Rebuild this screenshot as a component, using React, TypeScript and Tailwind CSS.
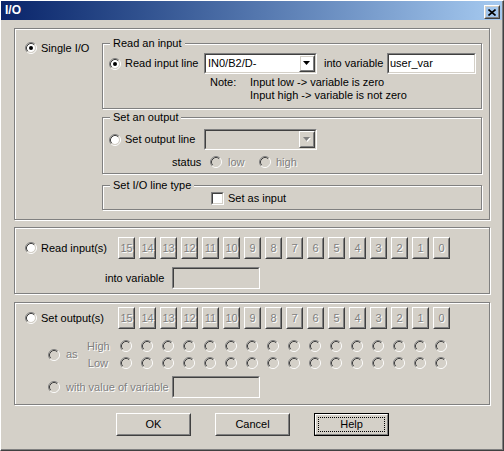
import React from 'react';

const FACE = '#D4D0C8';
const BITS = [15, 14, 13, 12, 11, 10, 9, 8, 7, 6, 5, 4, 3, 2, 1, 0];

const dis = 'text-[#808080] [text-shadow:1px_1px_0_#fff]';

function Radio({ checked = false, disabled = false }: { checked?: boolean; disabled?: boolean }) {
  return (
    <svg width="12" height="12" viewBox="0 0 12 12" className="block shrink-0">
      <circle cx="6" cy="6" r="4" fill={disabled ? FACE : '#fff'} />
      <path d="M2.11 9.89A5.5 5.5 0 0 1 9.89 2.11" fill="none" stroke="#808080" />
      <path d="M9.89 2.11A5.5 5.5 0 0 1 2.11 9.89" fill="none" stroke="#fff" />
      <path d="M2.82 9.18A4.5 4.5 0 0 1 9.18 2.82" fill="none" stroke="#404040" />
      <path d="M9.18 2.82A4.5 4.5 0 0 1 2.82 9.18" fill="none" stroke={FACE} />
      {checked && <circle cx="6" cy="6" r="2" fill="#000" />}
    </svg>
  );
}

function Checkbox() {
  return (
    <div className="w-[13px] h-[13px] shrink-0 border border-t-[#808080] border-l-[#808080] border-r-white border-b-white">
      <div className="w-full h-full bg-white border border-t-[#404040] border-l-[#404040] border-r-[#D4D0C8] border-b-[#D4D0C8]" />
    </div>
  );
}

function Sunken({ className = '', disabled = false, children }: { className?: string; disabled?: boolean; children?: React.ReactNode }) {
  return (
    <div className={`shrink-0 border border-t-[#808080] border-l-[#808080] border-r-white border-b-white ${className}`}>
      <div className={`w-full h-full border border-t-[#404040] border-l-[#404040] border-r-[#D4D0C8] border-b-[#D4D0C8] ${disabled ? 'bg-[#D4D0C8]' : 'bg-white'}`}>
        {children}
      </div>
    </div>
  );
}

function Raised({ className = '', children }: { className?: string; children?: React.ReactNode }) {
  return (
    <div className={`shrink-0 border border-t-white border-l-white border-r-[#404040] border-b-[#404040] ${className}`}>
      <div className="w-full h-full flex items-center justify-center border border-t-[#D4D0C8] border-l-[#D4D0C8] border-r-[#808080] border-b-[#808080]">
        {children}
      </div>
    </div>
  );
}

function Arrow({ disabled = false }: { disabled?: boolean }) {
  return (
    <svg width="8" height="5" viewBox="0 0 8 5" className="block">
      {disabled && <polygon points="1,1 8,1 4.5,5" fill="#fff" />}
      <polygon points="0,0 7,0 3.5,4" fill={disabled ? '#808080' : '#000'} />
    </svg>
  );
}

function Combo({ value, disabled = false }: { value?: string; disabled?: boolean }) {
  return (
    <Sunken className="w-[113px] h-[21px]" disabled={disabled}>
      <div className="flex h-full">
        <div className="flex-1 flex items-center pl-[2px]">{value}</div>
        <Raised className="w-[16px] h-full">
          <Arrow disabled={disabled} />
        </Raised>
      </div>
    </Sunken>
  );
}

function GroupBox({ className = '', label, children }: { className?: string; label?: string; children?: React.ReactNode }) {
  return (
    <div className={`relative shrink-0 border border-[#808080] shadow-[inset_1px_1px_0_#fff,1px_1px_0_#fff] ${className}`}>
      {label && (
        <span className="absolute -top-[7px] left-[7px] px-[3px] bg-[#D4D0C8] leading-[13px] whitespace-nowrap">{label}</span>
      )}
      {children}
    </div>
  );
}

function BitButtons() {
  return (
    <div className="flex gap-[4px]">
      {BITS.map(b => (
        <Raised key={b} className="w-[17px] h-[22px]">
          <span className={dis}>{b}</span>
        </Raised>
      ))}
    </div>
  );
}

function PushButton({ label }: { label: string }) {
  return (
    <Raised className="w-[75px] h-[23px]">
      <span>{label}</span>
    </Raised>
  );
}

export default function App() {
  return (
    <div className="w-[504px] h-[451px] bg-[#D4D0C8] text-black text-[11px] leading-[13px] overflow-hidden font-['Liberation_Sans',Arial,sans-serif]">
      <div className="h-full border border-t-white border-l-white border-r-[#404040] border-b-[#404040]">
        <div className="h-full border-r border-b border-r-[#808080] border-b-[#808080]">
          {/* title bar */}
          <div className="h-[19px] flex items-center justify-between pl-[4px] pr-[2px] bg-linear-to-r from-[#0A246A] to-[#A6CAF0]">
            <span className="text-white font-bold text-[12px]">I/O</span>
            <Raised className="w-[16px] h-[14px] self-end mb-[1px]">
              <svg width="8" height="7" viewBox="0 0 8 7" className="block">
                <path d="M0.5 0.5L7.5 6.5M7.5 0.5L0.5 6.5" stroke="#000" strokeWidth="1.6" />
              </svg>
            </Raised>
          </div>

          <div className="pl-[13px] pt-[8px] flex flex-col">
            {/* Single I/O */}
            <GroupBox className="w-[476px] h-[192px] flex">
              <div className="w-[87px] pl-[10px] pt-[13px]">
                <div className="flex items-center gap-[4px] h-[12px]">
                  <Radio checked />
                  <span className="whitespace-nowrap">Single I/O</span>
                </div>
              </div>
              <div className="pt-[14px] flex flex-col">
                <GroupBox label="Read an input" className="w-[380px] h-[66px]">
                  <div className="mt-[9px] pl-[6px] flex items-center h-[21px]">
                    <Radio checked />
                    <span className="ml-[4px] w-[79px] whitespace-nowrap">Read input line</span>
                    <Combo value="IN0/B2/D-" />
                    <span className="ml-[7px] w-[63px] whitespace-nowrap">into variable</span>
                    <Sunken className="w-[89px] h-[21px]">
                      <div className="h-full flex items-center pl-[1px]">user_var</div>
                    </Sunken>
                  </div>
                  <div className="mt-[2px] ml-[107px] flex">
                    <span className="w-[40px]">Note:</span>
                    <div className="flex flex-col whitespace-nowrap">
                      <span>Input low -&gt; variable is zero</span>
                      <span>Input high -&gt; variable is not zero</span>
                    </div>
                  </div>
                </GroupBox>

                <GroupBox label="Set an output" className="mt-[8px] w-[380px] h-[57px]">
                  <div className="mt-[11px] pl-[6px] flex items-center h-[21px]">
                    <Radio />
                    <span className="ml-[4px] w-[79px] whitespace-nowrap">Set output line</span>
                    <Combo disabled />
                  </div>
                  <div className="mt-[6px] ml-[69px] flex items-center h-[12px]">
                    <span className="w-[38px]">status</span>
                    <Radio disabled />
                    <span className={`ml-[6px] w-[31px] ${dis}`}>low</span>
                    <Radio disabled />
                    <span className={`ml-[5px] ${dis}`}>high</span>
                  </div>
                </GroupBox>

                <GroupBox label="Set I/O line type" className="mt-[11px] w-[380px] h-[25px]">
                  <div className="mt-[6px] ml-[108px] flex items-center h-[13px]">
                    <Checkbox />
                    <span className="ml-[4px] whitespace-nowrap">Set as input</span>
                  </div>
                </GroupBox>
              </div>
            </GroupBox>

            {/* Read input(s) */}
            <GroupBox className="mt-[7px] w-[476px] h-[67px]">
              <div className="mt-[9px] pl-[10px] flex items-center h-[22px]">
                <Radio />
                <span className="ml-[4px] w-[77px] whitespace-nowrap">Read input(s)</span>
                <BitButtons />
              </div>
              <div className="mt-[8px] pl-[90px] flex items-center h-[22px]">
                <span className="w-[67px] whitespace-nowrap">into variable</span>
                <Sunken className="w-[88px] h-[22px]" disabled />
              </div>
            </GroupBox>

            {/* Set output(s) */}
            <GroupBox className="mt-[8px] w-[476px] h-[103px]">
              <div className="mt-[4px] pl-[10px] flex items-center h-[22px]">
                <Radio />
                <span className="ml-[4px] w-[77px] whitespace-nowrap">Set output(s)</span>
                <BitButtons />
              </div>
              <div className="mt-[11px] pl-[33px] flex items-center">
                <Radio disabled />
                <span className={`ml-[6px] w-[21px] ${dis}`}>as</span>
                <div className="flex flex-col gap-[5px]">
                  {['High', 'Low'].map(row => (
                    <div key={row} className="flex items-center h-[12px]">
                      <span className={`w-[21px] text-right ${dis}`}>{row}</span>
                      <div className="ml-[12px] flex gap-[9px]">
                        {BITS.map(b => <Radio key={b} disabled />)}
                      </div>
                    </div>
                  ))}
                </div>
              </div>
              <div className="mt-[7px] pl-[33px] flex items-center h-[22px]">
                <Radio disabled />
                <span className={`ml-[6px] w-[106px] whitespace-nowrap ${dis}`}>with value of variable</span>
                <Sunken className="w-[88px] h-[22px]" disabled />
              </div>
            </GroupBox>

            {/* buttons */}
            <div className="mt-[8px] pl-[102px] flex">
              <PushButton label="OK" />
              <div className="ml-[24px]">
                <PushButton label="Cancel" />
              </div>
              <div className="ml-[24px] w-[75px] h-[23px] border border-black">
                <div className="w-full h-full border border-t-white border-l-white border-r-[#808080] border-b-[#808080] p-[2px]">
                  <div className="w-full h-full border border-dotted border-black flex items-center justify-center">
                    Help
                  </div>
                </div>
              </div>
            </div>
          </div>
        </div>
      </div>
    </div>
  );
}
